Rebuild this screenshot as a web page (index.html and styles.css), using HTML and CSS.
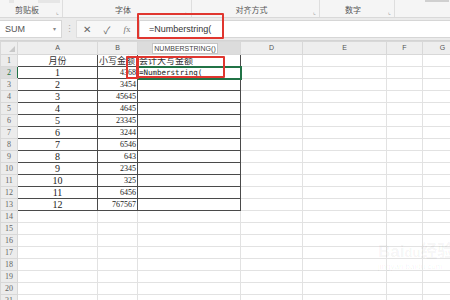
FILE: index.html
```html
<!DOCTYPE html>
<html lang="zh">
<head>
    <meta charset="UTF-8">
    <title>Numberstring</title>
    <link rel="stylesheet" href="styles.css">
</head>
<body>
    <div class="ribbon">
        <div class="group g-clip"><span class="stub stub-a"></span><span class="stub stub-b"></span><span class="label">剪贴板</span><span class="launch">⌞</span></div>
        <div class="group g-font"><span class="label">字体</span><span class="launch">⌞</span></div>
        <div class="group g-align"><span class="label">对齐方式</span><span class="launch">⌞</span></div>
        <div class="group g-num"><span class="label">数字</span><span class="launch">⌞</span></div>
        <div class="group g-rest"><span class="stub stub-c"></span></div>
    </div>

    <div class="formula-bar">
        <div class="name-box">SUM<span class="drop">▾</span></div>
        <div class="grip">⋮</div>
        <div class="fx-buttons">
            <span class="btn-x">✕</span>
            <span class="btn-ok">✓</span>
            <span class="btn-fx"><i>f</i>x</span>
        </div>
        <div class="formula-input">=Numberstring(</div>
        <div class="red-box box-formula"></div>
    </div>

    <div class="sheet">
        <table class="grid">
            <colgroup>
                <col class="c-head">
                <col class="c-a">
                <col class="c-b">
                <col class="c-c">
                <col class="c-d">
                <col class="c-e">
                <col class="c-f">
                <col class="c-g">
            </colgroup>
            <thead>
                <tr>
                    <th class="corner"><span class="tri"></span></th>
                    <th>A</th>
                    <th>B</th>
                    <th class="active-col"></th>
                    <th>D</th>
                    <th>E</th>
                    <th>F</th>
                    <th>G</th>
                </tr>
            </thead>
            <tbody id="rows"></tbody>
        </table>

        <div class="tip">NUMBERSTRING()</div>
        <div class="red-box box-b"></div>
        <div class="red-box box-c"></div>

        <div class="watermark">
            <div class="wm-logo">Bai<span class="paw">du</span>经验</div>
            <div class="wm-url">jingyan.baidu.com</div>
        </div>
    </div>

    <script>
        const amounts = ['4368', '3454', '45645', '4645', '23345', '3244', '6546', '643', '2345', '325', '6456', '767567'];
        const body = document.getElementById('rows');

        for (let r = 1; r <= 21; r++) {
            const tr = document.createElement('tr');
            let a = '', b = '', c = '';
            let boxed = r <= 13;

            if (r === 1) {
                a = '月份';
                b = '小写金额';
                c = '会计大写金额';
            } else if (r <= 13) {
                a = r - 1;
                b = amounts[r - 2];
            }
            if (r === 2) {
                c = '=Numberstring(';
            }

            tr.innerHTML = `
                <th class="${r === 2 ? 'active-row' : ''}">${r}</th>
                <td class="${boxed ? 'boxed' : ''} ${r === 1 ? 'cjk' : ''} center">${a}</td>
                <td class="${boxed ? 'boxed' : ''} ${r === 1 ? 'cjk' : 'small'} ${r === 1 ? 'left' : 'right'}">${b}</td>
                <td class="${boxed ? 'boxed' : ''} ${r === 1 ? 'cjk' : ''} ${r === 2 ? 'editing' : ''}">${c}</td>
                <td></td>
                <td></td>
                <td></td>
                <td></td>
            `;
            body.appendChild(tr);
        }
    </script>
</body>
</html>
```

FILE: styles.css
```css
body {
    margin: 0;
    width: 450px;
    height: 300px;
    overflow: hidden;
    background-color: #ffffff;
    font-family: 'Liberation Sans', 'Noto Sans CJK SC', sans-serif;
    color: #333;
}

/* ribbon strip */

.ribbon {
    display: flex;
    height: 17px;
    background-color: #f5f5f5;
    border-bottom: 1px solid #d9d9d9;
}

.group {
    position: relative;
    display: flex;
    align-items: flex-end;
    justify-content: center;
    padding-bottom: 2px;
    box-sizing: border-box;
    border-right: 1px solid #dedede;
}

.g-clip {
    width: 63px;
}

.g-font {
    width: 129px;
}

.g-align {
    width: 128px;
}

.g-num {
    width: 75px;
}

.g-rest {
    flex: 1;
    border-right: none;
}

.label {
    font-family: 'Noto Sans CJK SC', sans-serif;
    font-size: 8px;
    line-height: 10px;
    color: #555;
    margin-right: 8px;
}

.launch {
    position: absolute;
    right: 3px;
    bottom: 2px;
    font-size: 6px;
    line-height: 6px;
    color: #999;
}

.stub {
    position: absolute;
    top: 0;
    height: 3px;
    background-color: #e6e6e6;
}

.stub-a {
    left: 9px;
    width: 5px;
}

.stub-b {
    left: 38px;
    width: 22px;
}

.stub-c {
    left: 30px;
    width: 24px;
    height: 2px;
    background-color: #d0d0d0;
}

/* formula bar */

.formula-bar {
    position: relative;
    display: flex;
    align-items: center;
    height: 22px;
    background-color: #ebebeb;
    border-bottom: 1px solid #d4d4d4;
}

.name-box {
    position: relative;
    width: 62px;
    height: 18px;
    box-sizing: border-box;
    background-color: #ffffff;
    border: 1px solid #d6d6d6;
    border-left: none;
    padding-left: 5px;
    font-size: 9px;
    line-height: 16px;
    color: #555;
}

.drop {
    position: absolute;
    right: 5px;
    top: 0;
    font-size: 6px;
    color: #888;
}

.grip {
    width: 14px;
    text-align: center;
    font-size: 9px;
    color: #aaa;
}

.fx-buttons {
    display: flex;
    align-items: center;
    height: 18px;
    width: 62px;
    background-color: #f7f7f7;
    border: 1px solid #dedede;
    box-sizing: border-box;
}

.fx-buttons span {
    flex: 1;
    text-align: center;
    font-size: 10px;
    color: #666;
}

.btn-x {
    font-size: 9px;
}

.btn-fx {
    font-family: 'Liberation Serif', serif;
    font-size: 9px !important;
    color: #777 !important;
}

.formula-input {
    flex: 1;
    height: 18px;
    margin-left: 1px;
    background-color: #ffffff;
    border: 1px solid #d6d6d6;
    border-right: none;
    box-sizing: border-box;
    padding-left: 9px;
    font-size: 9px;
    line-height: 16px;
    color: #333;
}

.red-box {
    position: absolute;
    border: 2px solid #e0362f;
    border-radius: 1px;
    box-sizing: border-box;
}

.box-formula {
    left: 137px;
    top: -5px;
    width: 87px;
    height: 26px;
}

/* sheet */

.sheet {
    position: relative;
}

.grid {
    table-layout: fixed;
    border-collapse: collapse;
    width: 462px;
}

.c-head { width: 17px; }
.c-a { width: 80px; }
.c-b { width: 40px; }
.c-c { width: 103px; }
.c-d { width: 62px; }
.c-e { width: 84px; }
.c-f { width: 36px; }
.c-g { width: 40px; }

.grid tr {
    height: 12px;
}

.grid thead tr {
    height: 13px;
}

.grid th {
    padding: 0;
    background-color: #eeeeee;
    border: 1px solid #d8d8d8;
    font-weight: normal;
    font-size: 7px;
    line-height: 10px;
    color: #555;
    text-align: center;
}

.grid tbody th {
    background-color: #ececec;
    font-family: 'Liberation Serif', serif;
    font-size: 8px;
    color: #666;
}

.grid th.active-row {
    background-color: #dcdcdc;
    color: #217346;
    border-right: 1px solid #217346;
}

.grid th.active-col {
    background-color: #dcdcdc;
}

.corner {
    position: relative;
}

.tri {
    position: absolute;
    right: 2px;
    bottom: 2px;
    border-left: 6px solid transparent;
    border-bottom: 6px solid #c8c8c8;
}

.grid td {
    padding: 0 1px;
    border: 1px solid #e2e2e2;
    font-family: 'Liberation Serif', serif;
    font-size: 10px;
    line-height: 10px;
    color: #222;
    white-space: nowrap;
    overflow: hidden;
}

.grid td.boxed {
    border: 1px solid #4a4a4a;
}

.grid td.cjk {
    font-family: 'Noto Sans CJK SC', serif;
    font-size: 9px;
    color: #333;
}

.grid td.small {
    font-size: 8px;
}

.center {
    text-align: center;
}

.right {
    text-align: right;
}

.left {
    text-align: left;
}

.grid td.editing {
    font-family: 'DejaVu Sans Mono', monospace;
    font-size: 7.5px;
    outline: 2px solid #217346;
    outline-offset: -1px;
    overflow: visible;
}

.tip {
    position: absolute;
    left: 152px;
    top: 2px;
    width: 66px;
    height: 11px;
    box-sizing: border-box;
    background-color: #ffffff;
    border: 1px solid #c6c6c6;
    font-size: 7px;
    line-height: 9px;
    text-align: center;
    color: #444;
}

.box-b {
    left: 126px;
    top: 15px;
    width: 13px;
    height: 23px;
}

.box-c {
    left: 136px;
    top: 15px;
    width: 89px;
    height: 22px;
}

.watermark {
    position: absolute;
    left: 378px;
    top: 202px;
    color: rgba(0, 0, 0, 0.05);
    font-family: 'Liberation Sans', 'Noto Sans CJK SC', sans-serif;
}

.wm-logo {
    font-size: 17px;
    font-weight: bold;
    line-height: 18px;
    white-space: nowrap;
}

.paw {
    font-size: 13px;
}

.wm-url {
    font-size: 8px;
    line-height: 10px;
    white-space: nowrap;
}
```
